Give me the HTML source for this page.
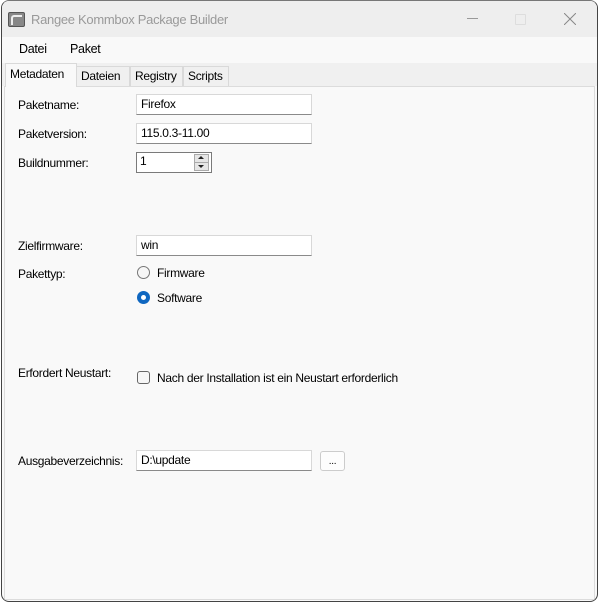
<!DOCTYPE html><html><head><style>
body{margin:0;width:600px;height:605px;background:#fff;font-family:"Liberation Sans",sans-serif;font-size:12px;letter-spacing:-0.3px;color:#000;position:relative;overflow:hidden}
.win{position:absolute;left:1px;top:0;width:595px;height:600px;border:1px solid #444;border-top-color:#777;border-radius:8px;background:#f9f9f9;overflow:hidden}
.title{position:absolute;left:0;top:0;right:0;height:36px;background:#eeeeee}
.menu{position:absolute;left:0;top:36px;right:0;height:26px;background:#f9f9f9}
.strip{position:absolute;left:0;top:62px;right:0;height:23px;background:#f0f0f0}
.a{position:absolute;white-space:nowrap}
.panel{position:absolute;left:2px;top:85px;width:589px;height:512px;background:#f9f9f9;border:1px solid #dcdcdc}
.tab{position:absolute;top:65px;height:20px;background:#f0f0f0;border:1px solid #d9d9d9;border-bottom:none;box-sizing:border-box;padding:2px 0 0 4px}
.in{position:absolute;height:21px;box-sizing:border-box;background:#fff;border:1px solid #d8d8d8;border-bottom:1px solid #8a8a8a;padding:2px 0 0 4px}
.lbl{position:absolute;left:16px}
</style></head><body>
<div class="win">
<div class="title"></div>
<div class="a" style="left:6px;top:11px;width:15px;height:13px;border:1px solid #555;background:#888;border-radius:2px"></div>
<div class="a" style="left:9px;top:14px;width:9px;height:8px;border-left:2px solid #eee;border-top:2px solid #eee;border-radius:3px 0 0 0"></div>
<div class="a" style="left:29px;top:11px;font-size:13px;color:#999">Rangee Kommbox Package Builder</div>
<div class="a" style="left:465px;top:17px;width:11px;border-top:1px solid #999"></div>
<div class="a" style="left:513px;top:13px;width:9px;height:9px;border:1px solid #ddd;border-radius:1px"></div>
<svg class="a" style="left:562px;top:12px" width="12" height="12"><path d="M0 0L12 12M12 0L0 12" stroke="#888" stroke-width="1"/></svg>
<div class="menu"></div>
<div class="a" style="left:17px;top:41px;font-size:12.5px">Datei</div>
<div class="a" style="left:68px;top:41px;font-size:12.5px">Paket</div>
<div class="strip"></div>
<div class="panel"></div>
<div class="tab" style="left:74px;width:54px">Dateien</div>
<div class="tab" style="left:128px;width:53px">Registry</div>
<div class="tab" style="left:181px;width:46px">Scripts</div>
<div class="tab" style="left:3px;top:62px;height:24px;width:72px;background:#f9f9f9;padding-top:3px">Metadaten</div>
<div class="a lbl" style="top:97px">Paketname:</div>
<div class="in" style="left:134px;top:93px;width:176px">Firefox</div>
<div class="a lbl" style="top:126px">Paketversion:</div>
<div class="in" style="left:134px;top:122px;width:176px">115.0.3-11.00</div>
<div class="a lbl" style="top:155px">Buildnummer:</div>
<div class="in" style="left:134px;top:151px;width:76px;border:1px solid #7a7a7a;padding:1px 0 0 3px">1</div>
<div class="a" style="left:192px;top:153px;width:15px;height:17px;background:#e6e6e6;border:1px solid #aaa;box-sizing:border-box"></div>
<div class="a" style="left:192px;top:161px;width:15px;border-top:1px solid #aaa"></div>
<div class="a" style="left:196px;top:155px;width:0;height:0;border-left:3px solid transparent;border-right:3px solid transparent;border-bottom:3px solid #222"></div>
<div class="a" style="left:196px;top:164px;width:0;height:0;border-left:3px solid transparent;border-right:3px solid transparent;border-top:3px solid #222"></div>
<div class="a lbl" style="top:238px">Zielfirmware:</div>
<div class="in" style="left:134px;top:234px;width:176px">win</div>
<div class="a lbl" style="top:266px">Pakettyp:</div>
<div class="a" style="left:135px;top:265px;width:11px;height:11px;border:1px solid #777;border-radius:50%;background:#f6f6f6"></div>
<div class="a" style="left:155px;top:265px">Firmware</div>
<div class="a" style="left:135px;top:290px;width:13px;height:13px;border-radius:50%;background:#0f67c0"></div>
<div class="a" style="left:139px;top:294px;width:5px;height:5px;border-radius:50%;background:#fff"></div>
<div class="a" style="left:155px;top:290px">Software</div>
<div class="a lbl" style="top:365px">Erfordert Neustart:</div>
<div class="a" style="left:135px;top:370px;width:11px;height:11px;border:1px solid #666;border-radius:3px;background:#f6f6f6"></div>
<div class="a" style="left:155px;top:370px">Nach der Installation ist ein Neustart erforderlich</div>
<div class="a lbl" style="top:453px">Ausgabeverzeichnis:</div>
<div class="in" style="left:134px;top:449px;width:176px">D:\update</div>
<div class="a" style="left:318px;top:450px;width:23px;height:18px;border:1px solid #ccc;border-radius:3px;background:#fdfdfd;text-align:center;line-height:20px;font-size:10px">...</div>
</div>
</body></html>
